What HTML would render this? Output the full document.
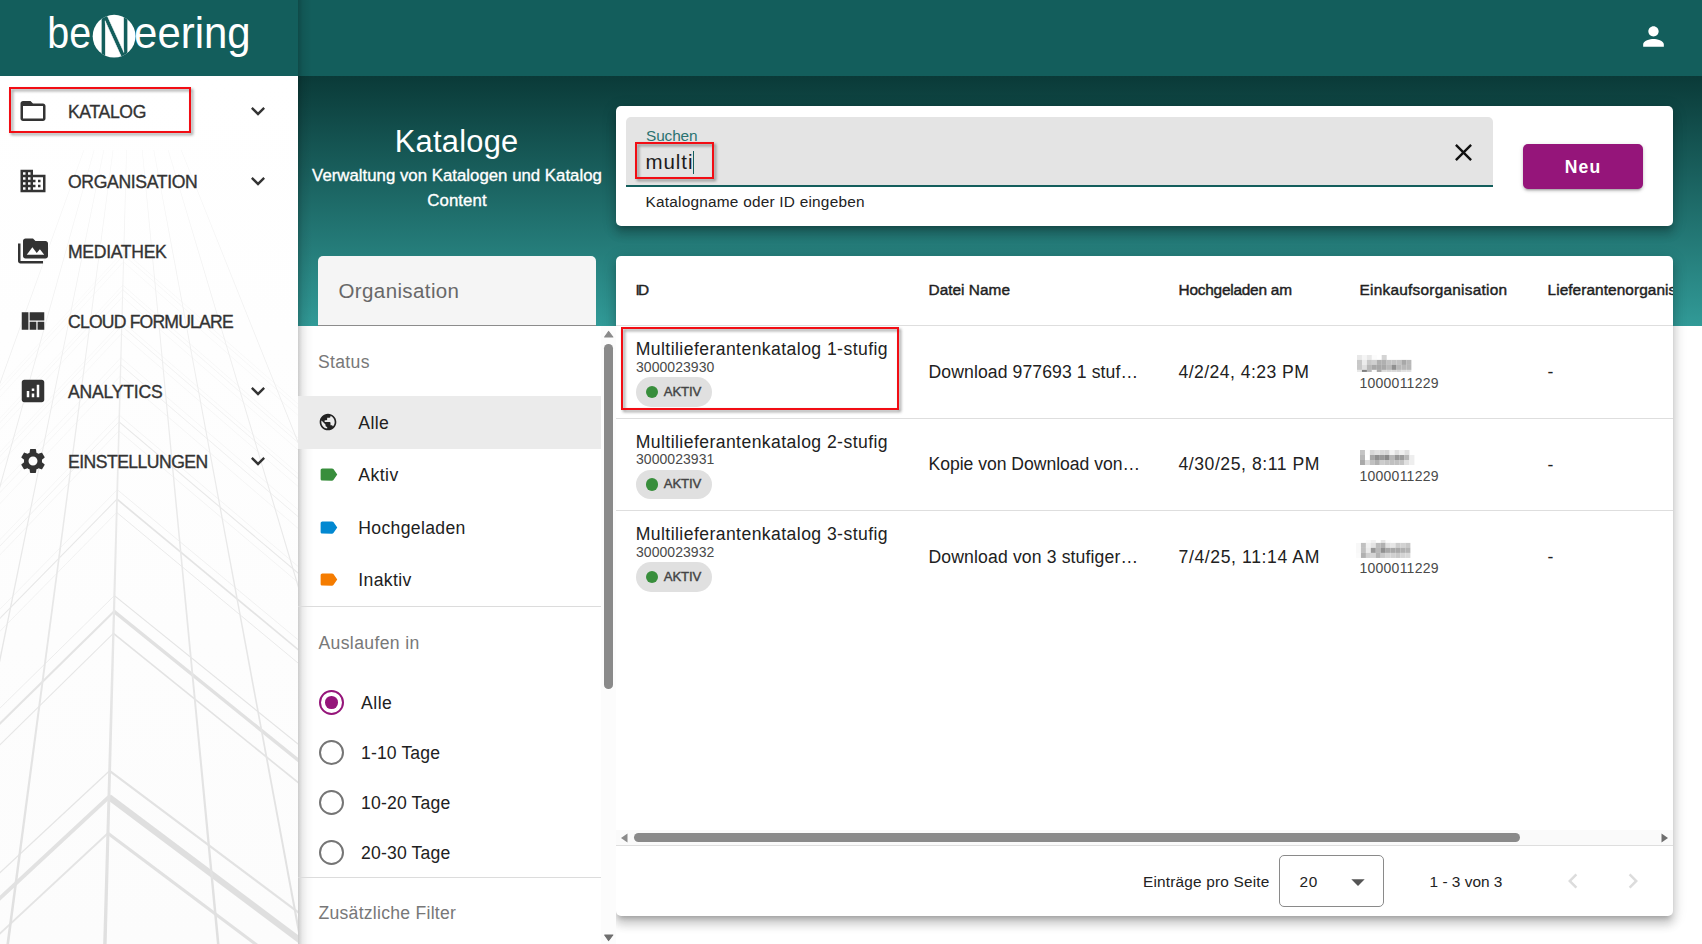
<!DOCTYPE html>
<html lang="de">
<head>
<meta charset="utf-8">
<title>Kataloge</title>
<style>
*{box-sizing:border-box;margin:0;padding:0}
html,body{width:1702px;height:944px;overflow:hidden;background:#fff}
body{font-family:"Liberation Sans",sans-serif;color:#212121;position:relative}
.abs{position:absolute}
.t{position:absolute;white-space:nowrap;line-height:1}
svg{display:block}
/* header */
#hdr{left:0;top:0;width:1702px;height:76px;background:#135e5c}
#grad{left:298px;top:76px;width:1404px;height:250px;background:linear-gradient(180deg,#0a3a38 0%,#319a97 100%)}
#below{left:298px;top:326px;width:1404px;height:618px;background:#fff}
/* sidebar */
#side{left:0;top:76px;width:298px;height:868px;background:#fff;overflow:hidden}
#sideshadow{left:298px;top:0;width:14px;height:944px;background:linear-gradient(90deg,rgba(0,0,0,.22),rgba(0,0,0,.08) 35%,rgba(0,0,0,0))}
.mi{position:absolute;left:0;width:298px;height:70px}
.mi svg.ic{position:absolute;left:18px;top:20px;width:30px;height:30px;fill:#333}
.mi svg.ch{position:absolute;left:244px;top:21px;width:28px;height:28px;fill:#333}
.mi .lb{position:absolute;left:68px;top:26px;font-size:17.6px;line-height:20px;color:#333;-webkit-text-stroke:.35px #333;white-space:nowrap}
.redbox{position:absolute;border:2px solid #f20d14;filter:drop-shadow(2.500px 2.500px 1.800px rgba(0,0,0,.42))}
/* cards */
.card{position:absolute;background:#fff;border-radius:5px;box-shadow:0 5px 5px -3px rgba(0,0,0,.2),0 8px 10px 1px rgba(0,0,0,.14),0 3px 14px 2px rgba(0,0,0,.12)}

.fh{font-size:17.600px;line-height:20px;color:#787878}
.fi{left:358.300px;font-size:17.600px;line-height:20px;color:#212121}
.fr{left:361px;font-size:17.600px;line-height:20px;color:#212121}
.rad{left:319px;width:25px;height:25px;border-radius:50%;border:2.200px solid #757575}
.rad.on{border-color:#95157a}
.rad.on i{position:absolute;left:4px;top:4px;width:12.600px;height:12.600px;border-radius:50%;background:#95157a}

.th{top:25.200px;font-size:15.400px;line-height:18px;color:#1f1f1f;-webkit-text-stroke:.45px #1f1f1f}
.row{left:0;width:1057px;height:92px}
.c1{left:20px;top:12.300px;font-size:17.600px;line-height:20px;color:#212121}
.c1b{left:20px;top:34.200px;font-size:14px;line-height:14px;color:#4a4a4a}
.chip{left:20px;top:51px;width:76px;height:29.500px;border-radius:15px;background:#e0e0e0}
.chip i{position:absolute;left:9.500px;top:8.500px;width:12.600px;height:12.600px;border-radius:50%;background:#388e3c}
.chip span{position:absolute;left:27.500px;top:7.500px;font-size:13.200px;line-height:15px;color:#444;-webkit-text-stroke:.4px #444;white-space:nowrap}
.c2{left:312.500px;top:35.600px;font-size:17.600px;line-height:20px;color:#212121}
.c3{left:562.500px;top:35.700px;font-size:17.600px;line-height:20px;color:#212121}
.c4{left:743.500px;top:50px;font-size:14px;line-height:14px;color:#4a4a4a}
.c5{left:931.500px;top:36px;font-size:17.600px;line-height:20px;color:#212121}
.blur{left:742px;top:31px;width:54px;height:16px;filter:blur(1.200px);background:linear-gradient(90deg,#eee 0,#d8d8d8 15%,#aaa 30%,#bbb 45%,#999 60%,#aaa 75%,#bdbdbd 100%);opacity:.8}
.ft{font-size:15.400px;line-height:18px;color:#222}

/*TUNE*/
#d0{letter-spacing:0.100px;}
#d1{letter-spacing:-0.034px;}
#d2{letter-spacing:0.139px;}
#epp{letter-spacing:0.183px;margin-top:0.70px;}
#f_aktiv{letter-spacing:0.440px;margin-top:0.60px;}
#f_alle{letter-spacing:0.370px;margin-top:0.60px;}
#f_ausl{letter-spacing:0.350px;margin-top:0.70px;}
#f_hoch{letter-spacing:0.340px;margin-top:0.80px;}
#f_inaktiv{letter-spacing:0.367px;margin-top:0.60px;}
#f_status{letter-spacing:0.320px;margin-top:0.50px;}
#f_zus{letter-spacing:0.260px;margin-top:0.30px;}
#h0{letter-spacing:-1.600px;margin-left:-0.60px;}
#h1{letter-spacing:0.027px;}
#h2{letter-spacing:-0.218px;}
#h3{letter-spacing:0.244px;}
#h4{letter-spacing:0.077px;}
#hint{letter-spacing:0.222px;margin-top:0.40px;}
#i0{letter-spacing:0.049px;}
#i1{letter-spacing:0.049px;margin-top:-0.40px;}
#i2{letter-spacing:0.049px;margin-top:-0.40px;}
#k0{letter-spacing:-0.180px;margin-top:-0.80px;margin-left:0.30px;}
#k1{letter-spacing:-0.180px;margin-top:-0.80px;margin-left:0.30px;}
#k2{letter-spacing:-0.180px;margin-top:-0.80px;margin-left:0.30px;}
#m0{letter-spacing:-0.360px;margin-top:-0.30px;}
#m1{letter-spacing:-0.345px;margin-top:-0.50px;}
#m2{letter-spacing:-0.315px;}
#m3{letter-spacing:-0.806px;}
#m4{letter-spacing:-0.230px;}
#m5{letter-spacing:-0.532px;}
#multi{letter-spacing:0.945px;margin-top:0.60px;}
#n0{letter-spacing:0.428px;margin-top:0.70px;margin-left:-0.30px;}
#n1{letter-spacing:0.428px;margin-top:0.70px;margin-left:-0.30px;}
#n2{letter-spacing:0.428px;margin-top:0.70px;margin-left:-0.30px;}
#n20{letter-spacing:0.670px;margin-top:0.70px;}
#neu{letter-spacing:1.050px;margin-top:0.30px;}
#o0{letter-spacing:0.241px;}
#o1{letter-spacing:0.241px;}
#o2{letter-spacing:0.241px;}
#org{letter-spacing:0.390px;margin-top:0.30px;}
#r0{letter-spacing:0.500px;margin-top:0.30px;}
#r1{letter-spacing:0.130px;margin-top:0.40px;}
#r2{letter-spacing:0.167px;margin-top:0.40px;}
#r3{letter-spacing:0.167px;margin-top:0.40px;}
#rng{letter-spacing:0.020px;margin-top:1.20px;}
#sub1{letter-spacing:0.016px;margin-top:0.30px;}
#sub2{letter-spacing:0.070px;margin-top:0.20px;}
#suchen{letter-spacing:-0.120px;}
#ttl{letter-spacing:0.260px;margin-top:1.00px;margin-left:-0.40px;}
#u0{letter-spacing:0.444px;}
#u1{letter-spacing:0.547px;}
#u2{letter-spacing:0.607px;}
/*ENDTUNE*/
</style>
</head>
<body>
<div id="hdr" class="abs"></div>
<div id="grad" class="abs"></div>
<div id="below" class="abs"></div>

<!-- SIDEBAR -->
<div id="side" class="abs">
<svg class="abs" style="left:0;top:0" width="298" height="868" viewBox="0 0 298 868"><defs><linearGradient id="vg" gradientUnits="userSpaceOnUse" x1="0" y1="74" x2="0" y2="868"><stop offset="0" stop-color="#f5f5f5"/><stop offset=".35" stop-color="#ebebeb"/><stop offset="1" stop-color="#e0e0e0"/></linearGradient><linearGradient id="bgf" x1="0" y1="0" x2="0" y2="1"><stop offset="0" stop-color="#fff"/><stop offset=".3" stop-color="#fefefe"/><stop offset="1" stop-color="#fcfcfc"/></linearGradient></defs><rect width="298" height="868" fill="url(#bgf)"/><line x1="123.7" y1="179.0" x2="-5.0" y2="319.8" stroke="#f3f3f3" stroke-width="0.50"/><line x1="123.7" y1="179.0" x2="305.0" y2="338.4" stroke="#f0f0f0" stroke-width="0.50"/><line x1="123.8" y1="174.8" x2="-5.0" y2="315.7" stroke="#f6f6f6" stroke-width="0.50"/><line x1="123.8" y1="174.8" x2="305.0" y2="334.1" stroke="#f3f3f3" stroke-width="0.50"/><line x1="123.5" y1="185.9" x2="-5.0" y2="326.5" stroke="#f5f5f5" stroke-width="0.50"/><line x1="123.5" y1="185.9" x2="305.0" y2="345.5" stroke="#f2f2f2" stroke-width="0.50"/><line x1="122.7" y1="213.6" x2="-5.0" y2="352.0" stroke="#f1f1f1" stroke-width="0.50"/><line x1="122.7" y1="213.6" x2="305.0" y2="372.6" stroke="#eeeeee" stroke-width="0.60"/><line x1="122.8" y1="209.2" x2="-5.0" y2="347.7" stroke="#f4f4f4" stroke-width="0.50"/><line x1="122.8" y1="209.2" x2="305.0" y2="368.1" stroke="#f1f1f1" stroke-width="0.50"/><line x1="122.5" y1="220.9" x2="-5.0" y2="359.0" stroke="#f3f3f3" stroke-width="0.50"/><line x1="122.5" y1="220.9" x2="305.0" y2="380.0" stroke="#f0f0f0" stroke-width="0.50"/><line x1="121.7" y1="250.0" x2="-5.0" y2="385.8" stroke="#f0f0f0" stroke-width="0.50"/><line x1="121.7" y1="250.0" x2="305.0" y2="408.5" stroke="#ededed" stroke-width="0.70"/><line x1="121.9" y1="245.4" x2="-5.0" y2="381.4" stroke="#f3f3f3" stroke-width="0.50"/><line x1="121.9" y1="245.4" x2="305.0" y2="403.7" stroke="#f0f0f0" stroke-width="0.50"/><line x1="121.5" y1="257.7" x2="-5.0" y2="393.3" stroke="#f2f2f2" stroke-width="0.50"/><line x1="121.5" y1="257.7" x2="305.0" y2="416.4" stroke="#efefef" stroke-width="0.50"/><line x1="120.7" y1="288.6" x2="-5.0" y2="421.8" stroke="#eeeeee" stroke-width="0.50"/><line x1="120.7" y1="288.6" x2="305.0" y2="446.6" stroke="#ebebeb" stroke-width="0.80"/><line x1="120.9" y1="281.7" x2="-5.0" y2="415.2" stroke="#f1f1f1" stroke-width="0.50"/><line x1="120.9" y1="281.7" x2="305.0" y2="439.6" stroke="#eeeeee" stroke-width="0.50"/><line x1="120.4" y1="300.0" x2="-5.0" y2="432.9" stroke="#f0f0f0" stroke-width="0.50"/><line x1="120.4" y1="300.0" x2="305.0" y2="458.3" stroke="#ededed" stroke-width="0.50"/><line x1="119.1" y1="345.8" x2="-5.0" y2="475.2" stroke="#ebebeb" stroke-width="0.68"/><line x1="119.1" y1="345.8" x2="305.0" y2="503.0" stroke="#e8e8e8" stroke-width="1.10"/><line x1="119.3" y1="339.2" x2="-5.0" y2="468.8" stroke="#eeeeee" stroke-width="0.50"/><line x1="119.3" y1="339.2" x2="305.0" y2="496.3" stroke="#ebebeb" stroke-width="0.50"/><line x1="118.9" y1="354.9" x2="-5.0" y2="484.0" stroke="#ededed" stroke-width="0.50"/><line x1="118.9" y1="354.9" x2="305.0" y2="512.3" stroke="#eaeaea" stroke-width="0.55"/><line x1="117.0" y1="423.2" x2="-5.0" y2="547.4" stroke="#e7e7e7" stroke-width="1.05"/><line x1="117.0" y1="423.2" x2="305.0" y2="579.3" stroke="#e4e4e4" stroke-width="1.70"/><line x1="117.3" y1="413.7" x2="-5.0" y2="538.2" stroke="#eaeaea" stroke-width="0.50"/><line x1="117.3" y1="413.7" x2="305.0" y2="569.5" stroke="#e7e7e7" stroke-width="0.59"/><line x1="116.7" y1="436.4" x2="-5.0" y2="560.3" stroke="#e9e9e9" stroke-width="0.53"/><line x1="116.7" y1="436.4" x2="305.0" y2="592.8" stroke="#e6e6e6" stroke-width="0.85"/><line x1="114.0" y1="535.4" x2="-5.0" y2="652.4" stroke="#e4e4e4" stroke-width="2.11"/><line x1="114.0" y1="535.4" x2="305.0" y2="689.7" stroke="#e1e1e1" stroke-width="3.40"/><line x1="114.4" y1="519.6" x2="-5.0" y2="637.0" stroke="#e7e7e7" stroke-width="0.74"/><line x1="114.4" y1="519.6" x2="305.0" y2="673.6" stroke="#e4e4e4" stroke-width="1.19"/><line x1="113.4" y1="557.3" x2="-5.0" y2="673.7" stroke="#e6e6e6" stroke-width="1.05"/><line x1="113.4" y1="557.3" x2="305.0" y2="712.1" stroke="#e3e3e3" stroke-width="1.70"/><line x1="108.9" y1="721.0" x2="-5.0" y2="826.7" stroke="#e2e2e2" stroke-width="3.84"/><line x1="108.9" y1="721.0" x2="305.0" y2="868.1" stroke="#dfdfdf" stroke-width="6.20"/><line x1="109.6" y1="694.8" x2="-5.0" y2="801.2" stroke="#e5e5e5" stroke-width="1.35"/><line x1="109.6" y1="694.8" x2="305.0" y2="841.4" stroke="#e2e2e2" stroke-width="2.17"/><line x1="107.9" y1="757.3" x2="-5.0" y2="862.2" stroke="#e4e4e4" stroke-width="1.92"/><line x1="107.9" y1="757.3" x2="305.0" y2="905.2" stroke="#e1e1e1" stroke-width="3.10"/><line x1="100.5" y1="1029.0" x2="-5.0" y2="1117.2" stroke="#e2e2e2" stroke-width="5.58"/><line x1="100.5" y1="1029.0" x2="305.0" y2="1163.5" stroke="#dfdfdf" stroke-width="9.00"/><line x1="101.6" y1="989.9" x2="-5.0" y2="1079.0" stroke="#e5e5e5" stroke-width="1.95"/><line x1="101.6" y1="989.9" x2="305.0" y2="1123.7" stroke="#e2e2e2" stroke-width="3.15"/><line x1="99.1" y1="1083.3" x2="-5.0" y2="1170.3" stroke="#e4e4e4" stroke-width="2.79"/><line x1="99.1" y1="1083.3" x2="305.0" y2="1218.7" stroke="#e1e1e1" stroke-width="4.50"/><polygon points="83.7,74 84.2,74 -203.3,874 -204.9,874" fill="url(#vg)"/><polygon points="93.9,74 94.4,74 -128.9,874 -130.7,874" fill="url(#vg)"/><polygon points="103.6,74 104.1,74 -58.3,874 -60.3,874" fill="url(#vg)"/><polygon points="112.8,74 113.3,74 8.3,874 5.6,874" fill="url(#vg)"/><polygon points="126.3,74 126.8,74 106.5,874 103.0,874" fill="url(#vg)"/><polygon points="142.0,74 142.5,74 220.1,874 217.5,874" fill="url(#vg)"/><polygon points="153.5,74 154.0,74 303.4,874 301.2,874" fill="url(#vg)"/><polygon points="167.9,74 168.4,74 407.5,874 405.6,874" fill="url(#vg)"/><polygon points="180.9,74 181.4,74 502.0,874 500.4,874" fill="url(#vg)"/></svg>
<div class="mi" style="top:0px"><svg class="ic" viewBox="0 0 24 24"><path d="M20 6h-8l-2-2H4c-1.1 0-1.99.9-1.99 2L2 18c0 1.1.9 2 2 2h16c1.1 0 2-.9 2-2V8c0-1.1-.9-2-2-2zm0 12H4V8h16v10z"/></svg><span class="lb" id="m0">KATALOG</span><svg class="ch" viewBox="0 0 24 24"><path d="M16.59 8.59L12 13.170 7.410 8.590 6 10l6 6 6-6z"/></svg></div>
<div class="mi" style="top:70px"><svg class="ic" viewBox="0 0 24 24"><path d="M12 7V3H2v18h20V7H12zM6 19H4v-2h2v2zm0-4H4v-2h2v2zm0-4H4V9h2v2zm0-4H4V5h2v2zm4 12H8v-2h2v2zm0-4H8v-2h2v2zm0-4H8V9h2v2zm0-4H8V5h2v2zm10 12h-8v-2h2v-2h-2v-2h2v-2h-2V9h8v10zm-2-8h-2v2h2v-2zm0 4h-2v2h2v-2z"/></svg><span class="lb" id="m1">ORGANISATION</span><svg class="ch" viewBox="0 0 24 24"><path d="M16.59 8.59L12 13.170 7.410 8.590 6 10l6 6 6-6z"/></svg></div>
<div class="mi" style="top:140px"><svg class="ic" viewBox="0 0 24 24"><path d="M2 6H0v5h.01L0 20c0 1.100.9 2 2 2h18v-2H2V6zm20-2h-8l-2-2H6c-1.100 0-1.990.9-1.990 2L4 16c0 1.100.9 2 2 2h16c1.100 0 2-.9 2-2V6c0-1.100-.9-2-2-2zM7 15l4.500-6 3.500 4.510 2.500-3.010L21 15H7z"/></svg><span class="lb" id="m2">MEDIATHEK</span></div>
<div class="mi" style="top:210px"><svg class="ic" viewBox="0 0 24 24"><path d="M21 5v6.5H9.33V5H21zm-6.330 14v-6.500H9.330V19h5.340zm1-6.500V19H21v-6.500h-5.330zM8.330 19V5H3v14h5.330z"/></svg><span class="lb" id="m3">CLOUD FORMULARE</span></div>
<div class="mi" style="top:280px"><svg class="ic" viewBox="0 0 24 24"><path d="M19 3H5c-1.100 0-2 .9-2 2v14c0 1.100.9 2 2 2h14c1.100 0 2-.9 2-2V5c0-1.100-.9-2-2-2zM9 17H7v-5h2v5zm4 0h-2v-3h2v3zm0-5h-2v-2h2v2zm4 5h-2V7h2v10z"/></svg><span class="lb" id="m4">ANALYTICS</span><svg class="ch" viewBox="0 0 24 24"><path d="M16.59 8.59L12 13.170 7.410 8.590 6 10l6 6 6-6z"/></svg></div>
<div class="mi" style="top:350px"><svg class="ic" viewBox="0 0 24 24"><path d="M19.14 12.94c.04-.3.06-.61.06-.94 0-.32-.02-.64-.07-.94l2.030-1.580c.18-.14.23-.41.12-.61l-1.920-3.320c-.12-.22-.37-.29-.59-.22l-2.390.96c-.5-.38-1.030-.7-1.620-.94l-.36-2.540c-.04-.24-.24-.41-.48-.41h-3.840c-.24 0-.43.17-.47.41l-.36 2.540c-.59.24-1.130.57-1.620.94l-2.390-.96c-.22-.08-.47 0-.59.22L2.740 8.870c-.12.21-.08.47.12.61l2.030 1.580c-.05.3-.09.63-.09.94s.02.64.07.94l-2.030 1.580c-.18.14-.23.41-.12.61l1.920 3.320c.12.22.37.29.59.22l2.390-.96c.5.38 1.030.7 1.620.94l.36 2.540c.05.24.24.41.48.41h3.840c.24 0 .44-.17.47-.41l.36-2.540c.59-.24 1.130-.56 1.620-.94l2.390.96c.22.08.47 0 .59-.22l1.920-3.320c.12-.22.07-.47-.12-.61l-2.010-1.580zM12 15.600c-1.980 0-3.600-1.620-3.600-3.600s1.620-3.600 3.600-3.600 3.600 1.620 3.600 3.600-1.620 3.600-3.600 3.600z"/></svg><span class="lb" id="m5">EINSTELLUNGEN</span><svg class="ch" viewBox="0 0 24 24"><path d="M16.59 8.59L12 13.170 7.410 8.590 6 10l6 6 6-6z"/></svg></div>
<div class="redbox" style="left:9px;top:11px;width:181.500px;height:46px"></div>

</div>
<div id="sideshadow" class="abs"></div>

<svg class="abs" style="left:40px;top:0" width="230" height="76" viewBox="40 0 230 76">
<defs><clipPath id="ccl"><circle cx="114.100" cy="36.200" r="21.400"/></clipPath></defs>
<text x="47.300" y="48.300" font-family="Liberation Sans, sans-serif" font-size="44.500" fill="#fff" textLength="43.900" lengthAdjust="spacingAndGlyphs">be</text>
<circle cx="114.100" cy="36.200" r="21.400" fill="#fff"/>
<g clip-path="url(#ccl)"><text transform="translate(97.500 59.100) scale(.735 1)" x="0" y="0" font-family="Liberation Sans, sans-serif" font-size="64" fill="#135e5c" stroke="#fff" stroke-width=".500">N</text></g>
<text x="134.100" y="48.300" font-family="Liberation Sans, sans-serif" font-size="44.500" fill="#fff" textLength="116.600" lengthAdjust="spacingAndGlyphs">eering</text>
</svg>

<svg class="abs" style="left:1637.500px;top:20.500px;width:31px;height:31px;fill:#fff" viewBox="0 0 24 24"><path d="M12 12c2.210 0 4-1.790 4-4s-1.790-4-4-4-4 1.790-4 4 1.790 4 4 4zm0 2c-2.670 0-8 1.340-8 4v2h16v-2c0-2.660-5.330-4-8-4z"/></svg>

<div class="t" id="ttl" style="left:298px;width:318px;top:124px;text-align:center;font-size:30.800px;line-height:34px;color:#fff">Kataloge</div>
<div class="t" id="sub1" style="left:298px;width:318px;top:164px;text-align:center;font-size:16.800px;line-height:24px;color:#fff;-webkit-text-stroke:.35px #fff">Verwaltung von Katalogen und Katalog</div>
<div class="t" id="sub2" style="left:298px;width:318px;top:188.500px;text-align:center;font-size:16.800px;line-height:24px;color:#fff;-webkit-text-stroke:.35px #fff">Content</div>

<div class="card" style="left:616px;top:106px;width:1057px;height:120px"></div>
<div class="abs" style="left:626px;top:117px;width:867px;height:70px;background:#e4e4e4;border-radius:5px 5px 0 0;border-bottom:2px solid #135e5c"></div>
<div class="t" id="suchen" style="left:646px;top:127px;font-size:15.400px;line-height:18px;color:#2b7371">Suchen</div>
<div class="t" id="multi" style="left:645.500px;top:149px;font-size:20.500px;line-height:24px;color:#1c1c1c">multi</div>
<div class="abs" style="left:693px;top:150.500px;width:1px;height:23px;background:#135e5c"></div>
<div class="redbox" style="left:635px;top:142px;width:79px;height:37px"></div>
<svg class="abs" style="left:1448.500px;top:137.500px;width:29px;height:29px;fill:#111" viewBox="0 0 24 24"><path d="M19 6.410L17.590 5 12 10.590 6.410 5 5 6.410 10.590 12 5 17.590 6.410 19 12 13.410 17.590 19 19 17.590 13.410 12z"/></svg>
<div class="t" id="hint" style="left:645.500px;top:193px;font-size:15.400px;line-height:18px;color:#222">Katalogname oder ID eingeben</div>
<div class="abs" style="left:1523px;top:144px;width:120px;height:44.500px;background:#95157a;border-radius:5px;box-shadow:0 3px 2px -2px rgba(0,0,0,.2),0 2px 3px 0 rgba(0,0,0,.14),0 1px 5px 0 rgba(0,0,0,.12)"></div>
<div class="t" id="neu" style="left:1523px;width:120px;text-align:center;top:156.500px;font-size:17.600px;line-height:20px;color:#fff;font-weight:bold">Neu</div>

<div class="card" id="tcard" style="left:616px;top:256px;width:1057px;height:660px;overflow:hidden">
<div class="abs" style="left:0;top:69px;width:1057px;height:1px;background:#dedede"></div>
<div class="t th" id="h0" style="left:20px">ID</div>
<div class="t th" id="h1" style="left:312.500px">Datei Name</div>
<div class="t th" id="h2" style="left:562.500px">Hochgeladen am</div>
<div class="t th" id="h3" style="left:743.500px">Einkaufsorganisation</div>
<div class="t th" id="h4" style="left:931.500px">Lieferantenorganisation</div>
<div class="abs row" style="top:70.00px">
<div class="t c1" id="n0">Multilieferantenkatalog 1-stufig</div>
<div class="t c1b" id="i0">3000023930</div>
<div class="abs chip"><i></i><span id="k0">AKTIV</span></div>
<div class="t c2" id="d0">Download 977693 1 stuf…</div>
<div class="t c3" id="u0">4/2/24, 4:23 PM</div>
<div class="t c4" id="o0">1000011229</div>
<div class="t c5">-</div>
</div>
<div class="abs" style="left:0;top:161.67px;width:1057px;height:1px;background:#dedede"></div>
<div class="abs row" style="top:162.67px">
<div class="t c1" id="n1">Multilieferantenkatalog 2-stufig</div>
<div class="t c1b" id="i1">3000023931</div>
<div class="abs chip"><i></i><span id="k1">AKTIV</span></div>
<div class="t c2" id="d1">Kopie von Download von…</div>
<div class="t c3" id="u1">4/30/25, 8:11 PM</div>
<div class="t c4" id="o1">1000011229</div>
<div class="t c5">-</div>
</div>
<div class="abs" style="left:0;top:254.34px;width:1057px;height:1px;background:#dedede"></div>
<div class="abs row" style="top:255.34px">
<div class="t c1" id="n2">Multilieferantenkatalog 3-stufig</div>
<div class="t c1b" id="i2">3000023932</div>
<div class="abs chip"><i></i><span id="k2">AKTIV</span></div>
<div class="t c2" id="d2">Download von 3 stufiger…</div>
<div class="t c3" id="u2">7/4/25, 11:14 AM</div>
<div class="t c4" id="o2">1000011229</div>
<div class="t c5">-</div>
</div>
<svg class="abs" style="left:741.2px;top:99.1px" width="55.3" height="16.9" viewBox="0 0 55.3 16.9"><rect x="0.00" y="0.0" width="4.99" height="4.95" fill="#e8e8e8"/><rect x="4.94" y="0.0" width="4.99" height="4.95" fill="#f5f5f5"/><rect x="9.88" y="0.0" width="4.99" height="4.95" fill="#e8e8e8"/><rect x="14.82" y="0.0" width="4.99" height="4.95" fill="#fcfcfc"/><rect x="24.70" y="0.0" width="4.99" height="4.95" fill="#d4d4d4"/><rect x="0.00" y="4.9" width="4.99" height="5.05" fill="#c8c8c8"/><rect x="4.94" y="4.9" width="4.99" height="5.05" fill="#ececec"/><rect x="9.88" y="4.9" width="4.99" height="5.05" fill="#c8c8c8"/><rect x="14.82" y="4.9" width="4.99" height="5.05" fill="#d0d0d0"/><rect x="19.76" y="4.9" width="4.99" height="5.05" fill="#b0b0b0"/><rect x="24.70" y="4.9" width="4.99" height="5.05" fill="#b0b0b0"/><rect x="29.64" y="4.9" width="4.99" height="5.05" fill="#c2c2c2"/><rect x="34.58" y="4.9" width="4.99" height="5.05" fill="#c2c2c2"/><rect x="39.52" y="4.9" width="4.99" height="5.05" fill="#c2c2c2"/><rect x="44.46" y="4.9" width="4.99" height="5.05" fill="#a8a8a8"/><rect x="49.40" y="4.9" width="4.99" height="5.05" fill="#b8b8b8"/><rect x="0.00" y="9.9" width="4.99" height="5.05" fill="#c8c8c8"/><rect x="4.94" y="9.9" width="4.99" height="5.05" fill="#e0e0e0"/><rect x="9.88" y="9.9" width="4.99" height="5.05" fill="#b8b8b8"/><rect x="14.82" y="9.9" width="4.99" height="5.05" fill="#a8a8a8"/><rect x="19.76" y="9.9" width="4.99" height="5.05" fill="#a8a8a8"/><rect x="24.70" y="9.9" width="4.99" height="5.05" fill="#a8a8a8"/><rect x="29.64" y="9.9" width="4.99" height="5.05" fill="#b8b8b8"/><rect x="34.58" y="9.9" width="4.99" height="5.05" fill="#909090"/><rect x="39.52" y="9.9" width="4.99" height="5.05" fill="#b8b8b8"/><rect x="44.46" y="9.9" width="4.99" height="5.05" fill="#b8b8b8"/><rect x="49.40" y="9.9" width="4.99" height="5.05" fill="#b8b8b8"/><rect x="0.00" y="14.9" width="4.99" height="2.05" fill="#e8e8e8"/><rect x="4.94" y="14.9" width="4.99" height="2.05" fill="#808080"/><rect x="9.88" y="14.9" width="4.99" height="2.05" fill="#b8b8b8"/><rect x="14.82" y="14.9" width="4.99" height="2.05" fill="#fafafa"/><rect x="19.76" y="14.9" width="4.99" height="2.05" fill="#a8a8a8"/><rect x="24.70" y="14.9" width="4.99" height="2.05" fill="#dcdcdc"/><rect x="29.64" y="14.9" width="4.99" height="2.05" fill="#d8d8d8"/><rect x="34.58" y="14.9" width="4.99" height="2.05" fill="#d8d8d8"/><rect x="39.52" y="14.9" width="4.99" height="2.05" fill="#d4d4d4"/><rect x="44.46" y="14.9" width="4.99" height="2.05" fill="#e0e0e0"/><rect x="49.40" y="14.9" width="4.99" height="2.05" fill="#e0e0e0"/></svg>
<svg class="abs" style="left:744.1px;top:194.0px" width="55.3" height="15.0" viewBox="0 0 55.3 15.0"><rect x="0.00" y="0.0" width="4.99" height="5.05" fill="#c4c4c4"/><rect x="4.94" y="0.0" width="4.99" height="5.05" fill="#fcfcfc"/><rect x="9.88" y="0.0" width="4.99" height="5.05" fill="#d8d8d8"/><rect x="14.82" y="0.0" width="4.99" height="5.05" fill="#e2e2e2"/><rect x="19.76" y="0.0" width="4.99" height="5.05" fill="#d8d8d8"/><rect x="24.70" y="0.0" width="4.99" height="5.05" fill="#d4d4d4"/><rect x="29.64" y="0.0" width="4.99" height="5.05" fill="#f4f4f4"/><rect x="34.58" y="0.0" width="4.99" height="5.05" fill="#e0e0e0"/><rect x="39.52" y="0.0" width="4.99" height="5.05" fill="#f0f0f0"/><rect x="44.46" y="0.0" width="4.99" height="5.05" fill="#e0e0e0"/><rect x="0.00" y="5.0" width="4.99" height="5.05" fill="#b8b8b8"/><rect x="9.88" y="5.0" width="4.99" height="5.05" fill="#a8a8a8"/><rect x="14.82" y="5.0" width="4.99" height="5.05" fill="#909090"/><rect x="19.76" y="5.0" width="4.99" height="5.05" fill="#989898"/><rect x="24.70" y="5.0" width="4.99" height="5.05" fill="#888888"/><rect x="29.64" y="5.0" width="4.99" height="5.05" fill="#b8b8b8"/><rect x="34.58" y="5.0" width="4.99" height="5.05" fill="#989898"/><rect x="39.52" y="5.0" width="4.99" height="5.05" fill="#9c9c9c"/><rect x="44.46" y="5.0" width="4.99" height="5.05" fill="#b8b8b8"/><rect x="49.40" y="5.0" width="4.99" height="5.05" fill="#eeeeee"/><rect x="0.00" y="10.0" width="4.99" height="5.05" fill="#a8a8a8"/><rect x="4.94" y="10.0" width="4.99" height="5.05" fill="#dcdcdc"/><rect x="9.88" y="10.0" width="4.99" height="5.05" fill="#c0c0c0"/><rect x="14.82" y="10.0" width="4.99" height="5.05" fill="#b0b0b0"/><rect x="19.76" y="10.0" width="4.99" height="5.05" fill="#cccccc"/><rect x="24.70" y="10.0" width="4.99" height="5.05" fill="#c4c4c4"/><rect x="29.64" y="10.0" width="4.99" height="5.05" fill="#c0c0c0"/><rect x="34.58" y="10.0" width="4.99" height="5.05" fill="#c0c0c0"/><rect x="39.52" y="10.0" width="4.99" height="5.05" fill="#c4c4c4"/><rect x="44.46" y="10.0" width="4.99" height="5.05" fill="#e0e0e0"/><rect x="49.40" y="10.0" width="4.99" height="5.05" fill="#eeeeee"/></svg>
<svg class="abs" style="left:740.2px;top:284.1px" width="55.3" height="17.9" viewBox="0 0 55.3 17.9"><rect x="9.88" y="0.0" width="4.99" height="2.95" fill="#fafafa"/><rect x="14.82" y="0.0" width="4.99" height="2.95" fill="#f2f2f2"/><rect x="24.70" y="0.0" width="4.99" height="2.95" fill="#e6e6e6"/><rect x="29.64" y="0.0" width="4.99" height="2.95" fill="#fcfcfc"/><rect x="0.00" y="2.9" width="4.99" height="5.05" fill="#f8f8f8"/><rect x="4.94" y="2.9" width="4.99" height="5.05" fill="#c0c0c0"/><rect x="9.88" y="2.9" width="4.99" height="5.05" fill="#f0f0f0"/><rect x="14.82" y="2.9" width="4.99" height="5.05" fill="#e4e4e4"/><rect x="19.76" y="2.9" width="4.99" height="5.05" fill="#bcbcbc"/><rect x="24.70" y="2.9" width="4.99" height="5.05" fill="#b0b0b0"/><rect x="29.64" y="2.9" width="4.99" height="5.05" fill="#e0e0e0"/><rect x="34.58" y="2.9" width="4.99" height="5.05" fill="#e6e6e6"/><rect x="39.52" y="2.9" width="4.99" height="5.05" fill="#cccccc"/><rect x="44.46" y="2.9" width="4.99" height="5.05" fill="#d2d2d2"/><rect x="49.40" y="2.9" width="4.99" height="5.05" fill="#c8c8c8"/><rect x="0.00" y="7.9" width="4.99" height="5.05" fill="#f8f8f8"/><rect x="4.94" y="7.9" width="4.99" height="5.05" fill="#c0c0c0"/><rect x="9.88" y="7.9" width="4.99" height="5.05" fill="#eaeaea"/><rect x="14.82" y="7.9" width="4.99" height="5.05" fill="#989898"/><rect x="19.76" y="7.9" width="4.99" height="5.05" fill="#b8b8b8"/><rect x="24.70" y="7.9" width="4.99" height="5.05" fill="#909090"/><rect x="29.64" y="7.9" width="4.99" height="5.05" fill="#a8a8a8"/><rect x="34.58" y="7.9" width="4.99" height="5.05" fill="#a8a8a8"/><rect x="39.52" y="7.9" width="4.99" height="5.05" fill="#a8a8a8"/><rect x="44.46" y="7.9" width="4.99" height="5.05" fill="#b0b0b0"/><rect x="49.40" y="7.9" width="4.99" height="5.05" fill="#b4b4b4"/><rect x="0.00" y="12.9" width="4.99" height="5.05" fill="#fafafa"/><rect x="4.94" y="12.9" width="4.99" height="5.05" fill="#b0b0b0"/><rect x="9.88" y="12.9" width="4.99" height="5.05" fill="#d0d0d0"/><rect x="14.82" y="12.9" width="4.99" height="5.05" fill="#d4d4d4"/><rect x="19.76" y="12.9" width="4.99" height="5.05" fill="#b4b4b4"/><rect x="24.70" y="12.9" width="4.99" height="5.05" fill="#c8c8c8"/><rect x="29.64" y="12.9" width="4.99" height="5.05" fill="#d4d4d4"/><rect x="34.58" y="12.9" width="4.99" height="5.05" fill="#d0d0d0"/><rect x="39.52" y="12.9" width="4.99" height="5.05" fill="#c8c8c8"/><rect x="44.46" y="12.9" width="4.99" height="5.05" fill="#d4d4d4"/><rect x="49.40" y="12.9" width="4.99" height="5.05" fill="#d8d8d8"/></svg>
<!-- h scrollbar -->
<div class="abs" style="left:0;top:574px;width:1057px;height:15px;background:#fafafa"></div>
<svg class="abs" style="left:3px;top:576px" width="10" height="12" viewBox="0 0 10 12"><path d="M8.500 1.500L2 6l6.500 4.500z" fill="#8a8a8a"/></svg>
<div class="abs" style="left:18px;top:577px;width:886px;height:9px;border-radius:4.500px;background:#8a8a8a"></div>
<svg class="abs" style="left:1044px;top:576px" width="10" height="12" viewBox="0 0 10 12"><path d="M1.500 1.500L8 6l-6.500 4.500z" fill="#6e6e6e"/></svg>
<div class="abs" style="left:0;top:589px;width:1057px;height:1px;background:#dedede"></div>
<!-- footer -->
<div class="t ft" id="epp" style="left:527px;top:616.500px">Einträge pro Seite</div>
<div class="abs" style="left:663px;top:599px;width:105px;height:52px;border:1px solid #8a8a8a;border-radius:5px"></div>
<div class="t ft" id="n20" style="left:683.500px;top:616.500px">20</div>
<svg class="abs" style="left:725.500px;top:610px;width:32px;height:32px;fill:#555" viewBox="0 0 24 24"><path d="M7 10l5 5 5-5z"/></svg>
<div class="t ft" id="rng" style="left:813.500px;top:616px">1 - 3 von 3</div>
<svg class="abs" style="left:942px;top:610px;width:30px;height:30px;fill:#dcdcdc" viewBox="0 0 24 24"><path d="M15.410 7.410L14 6l-6 6 6 6 1.410-1.410L10.830 12z"/></svg>
<svg class="abs" style="left:1002px;top:610px;width:30px;height:30px;fill:#dcdcdc" viewBox="0 0 24 24"><path d="M10 6L8.590 7.410 13.170 12l-4.580 4.590L10 18l6-6z"/></svg>
</div>
<div class="redbox" style="left:621px;top:327px;width:278px;height:83px"></div>

<div class="abs" style="left:298px;top:326px;width:303px;height:618px;background:#fff"></div>
<div class="abs" style="left:601px;top:326px;width:15px;height:618px;background:#fcfcfc"></div>
<div class="abs" style="left:298px;top:326px;width:16px;height:618px;background:linear-gradient(90deg,rgba(0,0,0,.2),rgba(0,0,0,.08) 28%,rgba(0,0,0,.025) 60%,rgba(0,0,0,0))"></div>
<div class="abs" style="left:318px;top:256px;width:278px;height:70px;background:#f5f5f5;border-radius:5px 5px 0 0;border-bottom:1px solid #8c8c8c"></div>
<div class="t" id="org" style="left:338.500px;top:279px;font-size:20.500px;line-height:24px;color:#686868">Organisation</div>
<div class="t fh" id="f_status" style="left:318px;top:351.500px">Status</div>
<div class="abs" style="left:298px;top:396px;width:303px;height:53px;background:#ebebeb"></div>
<svg class="abs" style="left:318px;top:412px;width:20px;height:20px;fill:#222" viewBox="0 0 24 24"><path d="M12 2C6.480 2 2 6.480 2 12s4.480 10 10 10 10-4.480 10-10S17.520 2 12 2zm-1 17.930c-3.950-.49-7-3.850-7-7.930 0-.62.08-1.210.21-1.790L9 15v1c0 1.100.9 2 2 2v1.930zm6.900-2.540c-.26-.81-1-1.390-1.900-1.390h-1v-3c0-.55-.45-1-1-1H8v-2h2c.55 0 1-.45 1-1V7h2c1.100 0 2-.9 2-2v-.41c2.930 1.190 5 4.060 5 7.410 0 2.080-.8 3.970-2.100 5.390z"/></svg>
<div class="t fi" id="f_alle" style="top:412px">Alle</div>
<svg class="abs" style="left:317.500px;top:464px;width:21px;height:21px;fill:#388e3c" viewBox="0 0 24 24"><path d="M17.63 5.84C17.27 5.33 16.67 5 16 5L5 5.010C3.900 5.010 3 5.900 3 7v10c0 1.100.9 1.990 2 1.990L16 19c.67 0 1.270-.33 1.630-.84L22 12l-4.370-6.160z"/></svg>
<div class="t fi" id="f_aktiv" style="top:464.500px">Aktiv</div>
<svg class="abs" style="left:317.500px;top:516.500px;width:21px;height:21px;fill:#0288d1" viewBox="0 0 24 24"><path d="M17.63 5.84C17.27 5.33 16.67 5 16 5L5 5.010C3.900 5.010 3 5.900 3 7v10c0 1.100.9 1.990 2 1.990L16 19c.67 0 1.270-.33 1.630-.84L22 12l-4.370-6.160z"/></svg>
<div class="t fi" id="f_hoch" style="top:517px">Hochgeladen</div>
<svg class="abs" style="left:317.500px;top:569px;width:21px;height:21px;fill:#f57c00" viewBox="0 0 24 24"><path d="M17.63 5.84C17.27 5.33 16.67 5 16 5L5 5.010C3.900 5.010 3 5.900 3 7v10c0 1.100.9 1.990 2 1.990L16 19c.67 0 1.270-.33 1.630-.84L22 12l-4.370-6.160z"/></svg>
<div class="t fi" id="f_inaktiv" style="top:569.500px">Inaktiv</div>
<div class="abs" style="left:298px;top:606px;width:303px;height:1px;background:#dcdcdc"></div>
<div class="t fh" id="f_ausl" style="left:318.500px;top:632.500px">Auslaufen in</div>
<div class="abs rad on" style="top:690px"><i></i></div>
<div class="t fr" id="r0" style="top:692.500px">Alle</div>
<div class="abs rad" style="top:740px"></div>
<div class="t fr" id="r1" style="top:742.500px">1-10 Tage</div>
<div class="abs rad" style="top:790px"></div>
<div class="t fr" id="r2" style="top:792.500px">10-20 Tage</div>
<div class="abs rad" style="top:840px"></div>
<div class="t fr" id="r3" style="top:842.500px">20-30 Tage</div>
<div class="abs" style="left:298px;top:877px;width:303px;height:1px;background:#dcdcdc"></div>
<div class="t fh" id="f_zus" style="left:318.500px;top:903px">Zusätzliche Filter</div>
<!-- vertical scrollbar -->
<svg class="abs" style="left:603px;top:329px" width="12" height="10" viewBox="0 0 12 10"><path d="M1.700 8L5.600 2.500 9.800 8z" fill="#8a8a8a" stroke="#8a8a8a" stroke-width="1.200" stroke-linejoin="round"/></svg>
<div class="abs" style="left:604.200px;top:344px;width:8.700px;height:345px;border-radius:4.350px;background:#8a8a8a"></div>
<svg class="abs" style="left:603px;top:933px" width="12" height="10" viewBox="0 0 12 10"><path d="M1.700 2L5.600 7.500 9.800 2z" fill="#6e6e6e" stroke="#6e6e6e" stroke-width="1.200" stroke-linejoin="round"/></svg>

</body>
</html>
